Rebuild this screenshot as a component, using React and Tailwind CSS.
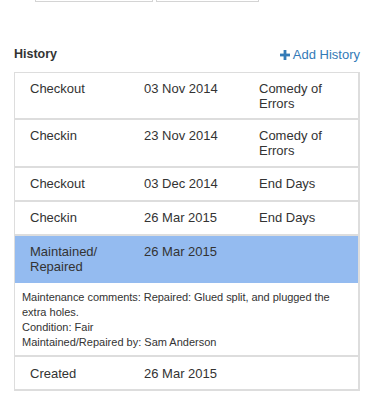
export default function App() {
  const rows = [
    { a: "Checkout", d: "03 Nov 2014", t: "Comedy of Errors", cls: "pt-[8px] pb-[7px]" },
    { a: "Checkin", d: "23 Nov 2014", t: "Comedy of Errors", cls: "pt-[8px] pb-[8px]" },
    { a: "Checkout", d: "03 Dec 2014", t: "End Days", cls: "pt-[8px] pb-[9px]" },
    { a: "Checkin", d: "26 Mar 2015", t: "End Days", cls: "pt-[8px] pb-[9px]" },
  ];
  return (
    <div className="w-[387px] h-[410px] bg-white text-[#333] overflow-hidden font-['Liberation_Sans',Arial,sans-serif]">
      <div className="flex h-[2px] pl-[35px] gap-[3px]">
        <div className="w-[118px] h-[2px] border-l border-r border-b border-[#d4d4d4]" />
        <div className="w-[103px] h-[2px] border-l border-r border-b border-[#d4d4d4]" />
      </div>
      <div className="px-[14px] w-[374px]">
        <div className="flex justify-between items-center mt-[45px] mb-[10px] h-[15px] leading-[15px] text-[13px]">
          <span className="font-bold text-[12.5px] text-[#333]">History</span>
          <span className="flex items-center text-[#337ab7]">
            <svg width="10" height="10" viewBox="0 0 10 10" className="mr-[3px]">
              <rect x="3.6" y="0" width="2.8" height="10" fill="#337ab7" />
              <rect x="0" y="3.6" width="10" height="2.8" fill="#337ab7" />
            </svg>
            Add History
          </span>
        </div>
        <div className="w-[346px] border-t border-[#ddd] text-[13px] leading-[15px]">
          {rows.map((r, i) => (
            <div key={i} className={"grid grid-cols-[114px_115px_1fr] pl-[15px] pr-[14px] border-l border-r-2 border-b-2 border-[#ddd] " + r.cls}>
              <div>{r.a}</div>
              <div>{r.d}</div>
              <div>{r.t}</div>
            </div>
          ))}
          <div className="grid grid-cols-[114px_115px_1fr] pl-[15px] pr-[14px] pt-[8px] pb-[9px] border-l border-r-2 border-[#ddd] bg-[#94bbf0]">
            <div>Maintained/<br />Repaired</div>
            <div>26 Mar 2015</div>
            <div />
          </div>
          <div className="pl-[7px] pr-[4px] pt-[7px] pb-[5px] border-l border-r-2 border-b-2 border-[#ddd] text-[11px] leading-[15px]">
            <div className="whitespace-nowrap tracking-[-0.05px]">Maintenance comments: Repaired: Glued split, and plugged the</div>
            <div>extra holes.</div>
            <div>Condition: Fair</div>
            <div>Maintained/Repaired by: Sam Anderson</div>
          </div>
          <div className="grid grid-cols-[114px_115px_1fr] pl-[15px] pr-[14px] pt-[9px] pb-[8px] border-l border-r-2 border-b-2 border-[#ddd]">
            <div>Created</div>
            <div>26 Mar 2015</div>
            <div />
          </div>
        </div>
      </div>
    </div>
  );
}
